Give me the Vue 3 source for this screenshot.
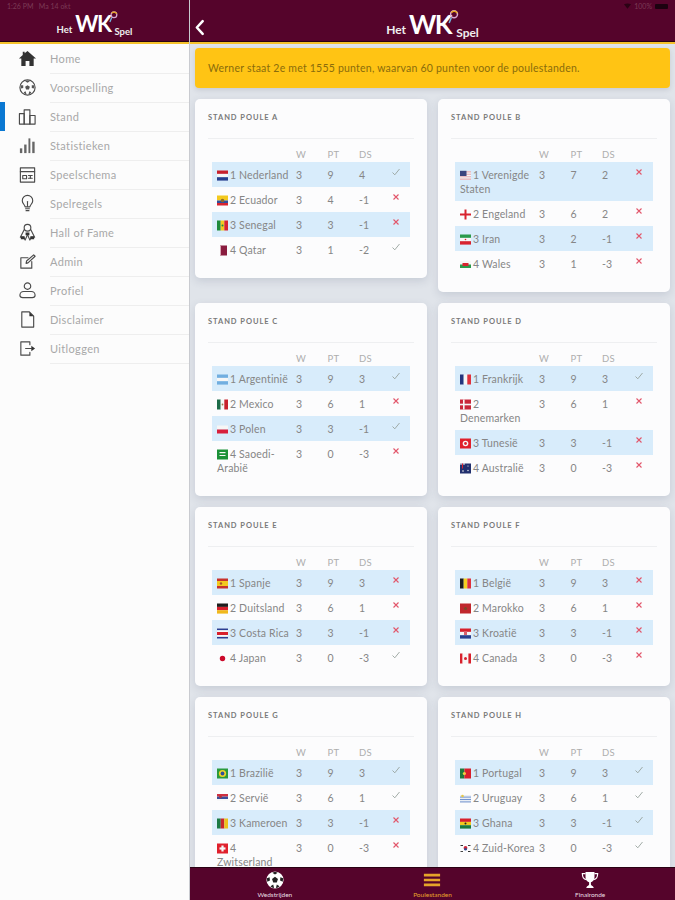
<template>
  <div class="app">
    <aside class="zijbalk">
      <header class="kop">
        <span class="status">1:26 PM &nbsp; Ma 14 okt</span>
        <div class="logo">
          <span class="logo-klein">Het</span>
          <span class="logo-wk">WK</span>
          <svg class="logo-bal" viewBox="0 0 10 13"><circle cx="5.5" cy="4" r="3.2" fill="none" stroke="#d8a8d0" stroke-width="1.4"/><path d="M3 2.5 A3.2 3.2 0 0 1 8.5 3" fill="none" stroke="#e8a820" stroke-width="1.4"/><path d="M3 7 L1 12" stroke="#6fb6e0" stroke-width="1.4"/></svg>
          <span class="logo-klein logo-spel">Spel</span>
        </div>
      </header>
      <nav class="menu">
        <a v-for="m in menu" :key="m.naam" class="menu-item" :class="{ actief: m.naam === 'Stand' }">
          <svg class="menu-icoon" viewBox="0 0 20 20">
            <path v-for="d in m.lijn" :key="d" :d="d" fill="none" stroke="#4a4a4a" stroke-width="1.2" stroke-linejoin="round" stroke-linecap="round"/>
            <path v-for="d in m.vlak" :key="d" :d="d" :fill="m.kleur || '#333'"/>
          </svg>
          <span class="menu-tekst">{{ m.naam }}</span>
        </a>
      </nav>
    </aside>

    <main class="hoofd">
      <header class="kop kop-hoofd">
        <svg class="terug" viewBox="0 0 10 16"><path d="M8 2 L2.5 8 L8 14" fill="none" stroke="#fff" stroke-width="2.4" stroke-linecap="round" stroke-linejoin="round"/></svg>
        <span class="status status-rechts">
          <svg class="wifi" viewBox="0 0 10 8"><path d="M0 1.5 Q5 -1 10 1.5 L5 8 Z" fill="#2a0214"/></svg>
          100%
          <i class="batterij"></i>
        </span>
        <div class="logo logo-groot">
          <span class="logo-klein">Het</span>
          <span class="logo-wk">WK</span>
          <svg class="logo-bal" viewBox="0 0 10 13"><circle cx="5.5" cy="4" r="3.2" fill="none" stroke="#d8a8d0" stroke-width="1.4"/><path d="M3 2.5 A3.2 3.2 0 0 1 8.5 3" fill="none" stroke="#e8a820" stroke-width="1.4"/><path d="M3 7 L1 12" stroke="#6fb6e0" stroke-width="1.4"/></svg>
          <span class="logo-klein logo-spel">Spel</span>
        </div>
      </header>

      <div class="inhoud">
        <div class="melding">Werner staat 2e met 1555 punten, waarvan 60 punten voor de poulestanden.</div>
        <div class="poules">
          <section v-for="p in poules" :key="p.naam" class="kaart">
            <h3 class="kaart-titel">Stand poule {{ p.naam }}</h3>
            <table class="stand">
              <colgroup>
                <col class="kol-naam" /><col class="kol-getal" /><col class="kol-getal" /><col class="kol-getal" /><col />
              </colgroup>
              <thead>
                <tr><th></th><th>W</th><th>PT</th><th>DS</th><th></th></tr>
              </thead>
              <tbody>
                <tr v-for="(r, i) in p.rijen" :key="r[1]">
                  <td class="naam">
                    <svg class="vlag" viewBox="0 0 11 11">
                      <rect v-for="(v, j) in vlaggen[r[1]].v" :key="j" :x="v[0]" :y="v[1]" :width="v[2]" :height="v[3]" :fill="v[4]"/>
                      <circle v-for="(c, j) in vlaggen[r[1]].c" :key="'c' + j" :cx="c[0]" :cy="c[1]" :r="c[2]" :fill="c[3]"/>
                    </svg>{{ i + 1 }} {{ r[0] }}
                  </td>
                  <td>3</td>
                  <td>{{ r[2] }}</td>
                  <td>{{ r[3] }}</td>
                  <td class="voorspeld">
                    <svg v-if="r[4]" class="teken" viewBox="0 0 10 10"><path d="M1.5 5.5 L3.8 7.8 L8.5 2" fill="none" stroke="#97a39d" stroke-width="0.9"/></svg>
                    <svg v-else class="teken" viewBox="0 0 10 10"><path d="M2.5 2.5 L7.5 7.5 M7.5 2.5 L2.5 7.5" fill="none" stroke="#e2566a" stroke-width="1.1"/></svg>
                  </td>
                </tr>
              </tbody>
            </table>
          </section>
        </div>
      </div>

      <footer class="tabbalk">
        <a class="tab">
          <svg class="tab-icoon" viewBox="0 0 20 20">
            <circle cx="10" cy="10" r="9.5" fill="#fff"/>
            <path d="M10 6.5 L13.3 9 L12 12.8 H8 L6.7 9 Z M10 .8 L13 2 L10 4 L7 2 Z M19 8 L18.6 12 L15.6 10.6 L16 7 Z M1 8 L1.4 12 L4.4 10.6 L4 7 Z M5 17 L8 15 L9 18.8 L6.5 18.4 Z M15 17 L12 15 L11 18.8 L13.5 18.4 Z" fill="#222"/>
          </svg>
          <span>Wedstrijden</span>
        </a>
        <a class="tab tab-actief">
          <svg class="tab-icoon" viewBox="0 0 20 20"><path d="M1 3 H19 V6 H1 Z M1 8.5 H19 V11.5 H1 Z M1 14 H19 V17 H1 Z" fill="#e6a52a"/></svg>
          <span>Poulestanden</span>
        </a>
        <a class="tab">
          <svg class="tab-icoon" viewBox="0 0 20 20">
            <path d="M5 1 H15 V7 C15 10.5 12.5 12 11 12.5 V15 C11 16 13 16.5 14 18 V19 H6 V18 C7 16.5 9 16 9 15 V12.5 C7.5 12 5 10.5 5 7 Z" fill="#fff"/>
            <path d="M5 3 H1.5 C1.5 7 3 9 6 9.5 M15 3 H18.5 C18.5 7 17 9 14 9.5" fill="none" stroke="#fff" stroke-width="1.3"/>
          </svg>
          <span>Finalronde</span>
        </a>
      </footer>
    </main>
  </div>
</template>

<script setup>
const menu = [
  { naam: 'Home', vlak: ['M10 2 L19 10 H16.5 V18 H12 V12.5 H8 V18 H3.5 V10 H1 L5 6.4 V3 H7 V4.6 Z'] },
  { naam: 'Voorspelling', lijn: ['M10 2 A8 8 0 1 0 10 18 A8 8 0 1 0 10 2 Z'], vlak: ['M10 7.5 L12.5 9.3 L11.5 12 H8.5 L7.5 9.3 Z M10 2.5 L12.5 3.5 L10 5 L7.5 3.5 Z M3 7.5 L5.5 7.5 L5.5 10.5 L3 11 Z M17 7.5 L14.5 7.5 L14.5 10.5 L17 11 Z M6 15 L8 14 L9 17 L7 16.6 Z M14 15 L12 14 L11 17 L13 16.6 Z'], kleur: '#555' },
  { naam: 'Stand', lijn: ['M1.5 18 V7 H6.5 V18 Z', 'M6.5 18 V3 H12.5 V18 Z', 'M12.5 18 V9 H18 V18 Z'] },
  { naam: 'Statistieken', vlak: ['M2 13 H4.5 V18 H2 Z', 'M6.5 9 H9 V18 H6.5 Z', 'M11 2.5 H13 V18 H11 Z', 'M15 6 H17.5 V18 H15 Z'], kleur: '#666' },
  { naam: 'Speelschema', lijn: ['M2.5 3 H17.5 V18 H2.5 Z', 'M2.5 7 H17.5', 'M5 11 H9 V14.5 H5 Z', 'M11 11 H15 M11 14 H15', 'M13 11 V14'] },
  { naam: 'Spelregels', lijn: ['M7.5 13.5 C7 11 4.5 10 4.5 7 A5.5 5.5 0 0 1 15.5 7 C15.5 10 13 11 12.5 13.5 Z', 'M8 15.5 H12', 'M8.5 17.5 H11.5', 'M10 13 V8'] },
  { naam: 'Hall of Fame', lijn: ['M10 1.5 A3.5 3.5 0 1 0 10 8.5 A3.5 3.5 0 1 0 10 1.5 Z', 'M6.5 7 L2.5 15 L6 15 L7.5 18 L10.5 11', 'M13.5 7 L17.5 15 L14 15 L12.5 18 L9.5 11'], vlak: ['M3 14 H7 V17 H3 Z M13 14 H17 V17 H13 Z M8 10 H12 V13 H8 Z'] },
  { naam: 'Admin', lijn: ['M14.5 10 V17 H3 V6 H10.5', 'M8.5 12 L9 9.5 L16.5 3 L18 4.5 L10.5 11.5 Z'] },
  { naam: 'Profiel', lijn: ['M10 2 A3.4 3.4 0 1 0 10 8.8 A3.4 3.4 0 1 0 10 2 Z', 'M6 11 H14 C16.5 11 18 13 18 15 C18 16.5 17 17.5 15 17.5 H5 C3 17.5 2 16.5 2 15 C2 13 3.5 11 6 11 Z'] },
  { naam: 'Disclaimer', lijn: ['M4 2 H12 L16.5 6.5 V18 H4 Z'], vlak: ['M12 2 L16.5 6.5 H12 Z'] },
  { naam: 'Uitloggen', lijn: ['M12.5 6 V3 H3 V17 H12.5 V14', 'M8 10 H14'], vlak: ['M14 7 L18 10 L14 13 Z'] }
]

const blauw = '#2f4f9c'
const rood = '#d8232f'
const groen = '#1f8a3c'
const geel = '#f3c91f'
const wit = '#f6f6f6'

const vlaggen = {
  nl: { v: [[0, 0.5, 11, 3.4, '#c8202c'], [0, 3.9, 11, 3.3, wit], [0, 7.2, 11, 3.4, '#26408f']] },
  ec: { v: [[0, 0.5, 11, 5, geel], [0, 5.5, 11, 2.5, blauw], [0, 8, 11, 2.5, rood]], c: [[5.5, 5.5, 1.8, '#8d6a2a']] },
  sn: { v: [[0, 0.5, 3.7, 10, groen], [3.7, 0.5, 3.6, 10, geel], [7.3, 0.5, 3.7, 10, rood]], c: [[5.5, 5.5, 1, groen]] },
  qa: { v: [[3, 0.5, 7, 10, '#8a1c3f'], [3, 0.5, 1, 10, '#d9a7b5']] },
  us: { v: [[0, 1, 11, 9, '#e8bcc2'], [0, 2.6, 11, 1, wit], [0, 5, 11, 1, wit], [0, 7.4, 11, 1, wit], [0, 0.8, 6.5, 5.2, '#39457f']] },
  en: { v: [[0, 4.5, 11, 2, rood], [4.5, 0.5, 2, 10, rood]] },
  ir: { v: [[0, 0.5, 11, 3.4, '#2b9a4b'], [0, 3.9, 11, 3.3, wit], [0, 7.2, 11, 3.4, rood]], c: [[5.5, 5.5, 0.8, rood]] },
  wa: { v: [[0, 2, 11, 3.5, wit], [0, 5.5, 11, 3.5, '#2b9a4b'], [2.5, 4, 6, 3, rood]] },
  ar: { v: [[0, 0.5, 11, 3.4, '#71aee0'], [0, 3.9, 11, 3.3, wit], [0, 7.2, 11, 3.4, '#71aee0']] },
  mx: { v: [[0, 0.5, 3.7, 10, '#1c6b48'], [3.7, 0.5, 3.6, 10, wit], [7.3, 0.5, 3.7, 10, '#c8202c']], c: [[5.5, 5.5, 0.9, '#9a7a4a']] },
  pl: { v: [[0, 1.5, 11, 4, wit], [0, 5.5, 11, 4, '#d8203c']] },
  sa: { v: [[0, 0.5, 11, 10, '#1b9138'], [2.5, 3, 6, 1.2, wit], [2.5, 6, 6, 1, wit]] },
  fr: { v: [[0, 0.5, 3.7, 10, '#24357e'], [3.7, 0.5, 3.6, 10, wit], [7.3, 0.5, 3.7, 10, '#e0313c']] },
  dk: { v: [[0, 0.5, 11, 10, '#c9273a'], [3, 0.5, 1.6, 10, wit], [0, 4.7, 11, 1.6, wit]] },
  tn: { v: [[0, 0.5, 11, 10, '#e0202c']], c: [[5.5, 5.5, 2.8, wit], [5.5, 5.5, 1.4, '#e0202c']] },
  au: { v: [[0, 0.5, 11, 10, '#22306e'], [0, 0.5, 5, 1, wit], [2, 0.5, 1, 5, rood]], c: [[8, 3, 0.6, wit], [8, 7.5, 0.7, wit], [3, 8, 0.8, wit]] },
  es: { v: [[0, 0.5, 11, 10, '#c8322c'], [0, 3, 11, 5, geel]], c: [[4, 5.5, 1.2, '#a9572a']] },
  de: { v: [[0, 0.5, 11, 3.4, '#1d1d1d'], [0, 3.9, 11, 3.3, '#d8202c'], [0, 7.2, 11, 3.4, '#f0b81c']] },
  cr: { v: [[0, 0.5, 11, 10, wit], [0, 0.5, 11, 1.6, '#2a3f92'], [0, 4, 11, 3, '#d8202c'], [0, 8.9, 11, 1.6, '#2a3f92']] },
  jp: { v: [], c: [[5.5, 5.5, 2.7, '#cc0a2b']] },
  be: { v: [[0, 0.5, 3.7, 10, '#1d1d1d'], [3.7, 0.5, 3.6, 10, '#f5d020'], [7.3, 0.5, 3.7, 10, '#e0313c']] },
  ma: { v: [[0, 0.5, 11, 10, '#c0272d']], c: [[5.5, 5.5, 1.6, '#7a4a2a']] },
  hr: { v: [[0, 0.5, 11, 3.4, '#d8202c'], [0, 3.9, 11, 3.3, wit], [0, 7.2, 11, 3.4, '#28408f'], [4, 3, 3, 4, '#d8606c']] },
  ca: { v: [[0, 0.5, 2.6, 10, '#d8202c'], [2.6, 0.5, 5.8, 10, wit], [8.4, 0.5, 2.6, 10, '#d8202c']], c: [[5.5, 5.5, 1.5, '#d8202c']] },
  br: { v: [[0, 0.5, 11, 10, '#2a9a3c']], c: [[5.5, 5.5, 3.6, '#efd52a'], [5.5, 5.5, 1.9, blauw]] },
  rs: { v: [[0, 1, 11, 2.6, '#d03040'], [0, 3.6, 11, 2.4, '#3a4f9a'], [0, 6, 11, 1.5, wit]], c: [[3.5, 3.8, 1.4, '#b0303c']] },
  cm: { v: [[0, 0.5, 3.7, 10, '#1c7a45'], [3.7, 0.5, 3.6, 10, '#c8282c'], [7.3, 0.5, 3.7, 10, '#eec21c']] },
  ch: { v: [[0, 0.5, 11, 10, '#e0202c'], [4.4, 2.5, 2.2, 6, wit], [2.5, 4.4, 6, 2.2, wit]] },
  pt: { v: [[0, 0.5, 4.4, 10, '#1f7a3c'], [4.4, 0.5, 6.6, 10, '#d8202c']], c: [[4.4, 5.5, 1.6, '#f0d040']] },
  uy: { v: [[0, 2, 11, 7.5, '#e9eef5'], [0, 3.6, 11, 1, '#7394d0'], [0, 6, 11, 1, '#7394d0'], [0, 8.4, 11, 1, '#7394d0']], c: [[2.5, 3, 1.3, '#e6c84a']] },
  gh: { v: [[0, 0.5, 11, 3.4, '#d8202c'], [0, 3.9, 11, 3.3, geel], [0, 7.2, 11, 3.4, '#1c7a3c']], c: [[5.5, 5.5, 1, '#222']] },
  kr: { v: [[0.5, 2, 2.5, 1, '#333'], [8, 2, 2.5, 1, '#444'], [0.5, 8, 2.5, 1, '#444'], [8, 8, 2.5, 1, '#333']], c: [[5.5, 5, 1.9, '#d0253a'], [5.5, 6.2, 1.3, '#2c4a90']] }
}

const poules = [
  { naam: 'A', rijen: [['Nederland', 'nl', 9, 4, true], ['Ecuador', 'ec', 4, -1, false], ['Senegal', 'sn', 3, -1, false], ['Qatar', 'qa', 1, -2, true]] },
  { naam: 'B', rijen: [['Verenigde Staten', 'us', 7, 2, false], ['Engeland', 'en', 6, 2, false], ['Iran', 'ir', 2, -1, false], ['Wales', 'wa', 1, -3, false]] },
  { naam: 'C', rijen: [['Argentinië', 'ar', 9, 3, true], ['Mexico', 'mx', 6, 1, false], ['Polen', 'pl', 3, -1, true], ['Saoedi-Arabië', 'sa', 0, -3, false]] },
  { naam: 'D', rijen: [['Frankrijk', 'fr', 9, 3, true], ['Denemarken', 'dk', 6, 1, false], ['Tunesië', 'tn', 3, -1, false], ['Australië', 'au', 0, -3, false]] },
  { naam: 'E', rijen: [['Spanje', 'es', 9, 3, false], ['Duitsland', 'de', 6, 1, false], ['Costa Rica', 'cr', 3, -1, false], ['Japan', 'jp', 0, -3, true]] },
  { naam: 'F', rijen: [['België', 'be', 9, 3, false], ['Marokko', 'ma', 6, 1, false], ['Kroatië', 'hr', 3, -1, false], ['Canada', 'ca', 0, -3, false]] },
  { naam: 'G', rijen: [['Brazilië', 'br', 9, 3, true], ['Servië', 'rs', 6, 1, true], ['Kameroen', 'cm', 3, -1, false], ['Zwitserland', 'ch', 0, -3, false]] },
  { naam: 'H', rijen: [['Portugal', 'pt', 9, 3, true], ['Uruguay', 'uy', 6, 1, true], ['Ghana', 'gh', 3, -1, true], ['Zuid-Korea', 'kr', 0, -3, true]] }
]
</script>

<style>
html, body { margin: 0; }
</style>

<style scoped>
.app {
  display: flex;
  width: 675px;
  height: 900px;
  overflow: hidden;
  font-family: Lato, "Open Sans", sans-serif;
  color: #747474;
  background: #e0e4ea;
}
.zijbalk {
  width: 189px;
  flex: none;
  background: #fcfcfc;
}
.hoofd {
  flex: 1;
  min-width: 0;
  display: flex;
  flex-direction: column;
  border-left: 1px solid #c9cbd0;
}

/* kop */
.kop {
  position: relative;
  height: 41px;
  background: #55042b;
  border-bottom: 1px solid #2a0214;
  display: flex;
  align-items: flex-end;
  justify-content: center;
  flex: none;
  margin-bottom: 2px;
}
.kop::after {
  content: "";
  position: absolute;
  left: 0;
  right: 0;
  bottom: -3px;
  height: 2px;
  background: #f5c22c;
}
.status {
  position: absolute;
  left: 7px;
  top: 2px;
  font-size: 7px;
  color: #7b3a55;
}
.status-rechts {
  left: auto;
  right: 7px;
  display: flex;
  align-items: center;
  gap: 3px;
}
.wifi { width: 7px; height: 6px; }
.batterij {
  display: block;
  width: 13px;
  height: 5px;
  background: #1c0210;
  border-radius: 1px;
}
.terug {
  position: absolute;
  left: 4px;
  top: 19px;
  width: 11px;
  height: 17px;
}
.logo {
  position: relative;
  display: flex;
  align-items: flex-end;
  color: #fff;
  line-height: 1;
  padding-bottom: 7px;
}
.logo-klein {
  font-size: 9.5px;
  font-weight: 700;
  color: #eee;
}
.logo-wk {
  font-size: 22px;
  font-weight: 700;
  letter-spacing: -1.5px;
  line-height: 20px;
  margin: 0 4px 0 3px;
}
.logo-spel { margin-bottom: -2px; }
.logo-bal {
  position: absolute;
  right: 14px;
  top: -3px;
  width: 9px;
  height: 12px;
}
.logo-groot { padding-bottom: 5px; }
.logo-groot .logo-klein { font-size: 12px; }
.logo-groot .logo-wk { font-size: 26px; line-height: 24px; margin-right: 5px; }
.logo-groot .logo-spel { margin-bottom: -3px; }
.logo-groot .logo-bal { right: 20px; top: -2px; width: 11px; height: 14px; }

/* menu */
.menu { display: flex; flex-direction: column; }
.menu-item {
  position: relative;
  display: flex;
  align-items: center;
  height: 29px;
  padding-left: 18px;
  box-sizing: border-box;
}
.menu-item.actief::before {
  content: "";
  position: absolute;
  left: 0;
  top: 0;
  bottom: 0;
  width: 5px;
  background: #0a78d2;
}
.menu-icoon { width: 19px; height: 19px; flex: none; }
.menu-tekst {
  flex: 1;
  margin-left: 13px;
  height: 100%;
  display: flex;
  align-items: center;
  border-bottom: 1px solid #eeeeee;
  font-size: 11px;
  letter-spacing: 0.35px;
  color: #a8a8a8;
}

/* inhoud */
.inhoud {
  flex: 1;
  min-height: 0;
  overflow: hidden;
  padding: 4px 5px 0;
}
.melding {
  height: 40px;
  display: flex;
  align-items: center;
  padding-left: 13px;
  background: #ffc414;
  border-radius: 4px;
  box-shadow: 0 2px 5px rgba(60, 70, 90, 0.15);
  font-size: 10.5px;
  letter-spacing: 0.22px;
  color: #8a6c0c;
}
.poules {
  display: grid;
  grid-template-columns: 1fr 1fr;
  gap: 11px;
  margin-top: 11px;
  align-items: start;
}
.kaart {
  padding: 14px 13px 16px;
  background: #fcfcfd;
  border-radius: 5px;
  box-shadow: 0 3px 9px rgba(70, 80, 110, 0.16);
}
.kaart-titel {
  margin: 0;
  height: 25px;
  border-bottom: 1px solid #eeeff1;
  font-size: 7.5px;
  font-weight: 700;
  line-height: 9px;
  letter-spacing: 0.95px;
  text-transform: uppercase;
  color: #797979;
}
.stand {
  width: 198px;
  margin: 9px 0 0 4px;
  table-layout: fixed;
  border-collapse: collapse;
  font-size: 10.5px;
  line-height: 14px;
}
.kol-naam { width: 84px; }
.kol-getal { width: 31.5px; }
.stand th {
  padding: 0;
  font-size: 9.5px;
  font-weight: 400;
  text-align: left;
  letter-spacing: 0.4px;
  color: #aeaeae;
}
.stand td {
  padding: 5.5px 0;
  vertical-align: top;
  color: #868686;
}
.stand tbody tr:nth-child(odd) { background: #d8ecfb; }
.stand td.naam {
  padding-left: 5px;
  padding-right: 3px;
  letter-spacing: 0.15px;
}
.vlag {
  width: 11px;
  height: 11px;
  margin-right: 2px;
  vertical-align: -2px;
}
.voorspeld { padding-top: 5px !important; }
.teken { display: block; width: 10px; height: 10px; }

/* tabbalk */
.tabbalk {
  flex: none;
  height: 32px;
  padding: 0 6px;
  display: grid;
  grid-template-columns: repeat(3, 1fr);
  background: #55042b;
  border-top: 1px solid #2a0214;
}
.tab {
  display: flex;
  flex-direction: column;
  align-items: center;
  padding-top: 3px;
  font-size: 6.5px;
  line-height: 8px;
  color: #e8dfe3;
}
.tab-actief { color: #e6a52a; }
.tab-icoon { width: 18px; height: 18px; margin-bottom: 2px; }
</style>
